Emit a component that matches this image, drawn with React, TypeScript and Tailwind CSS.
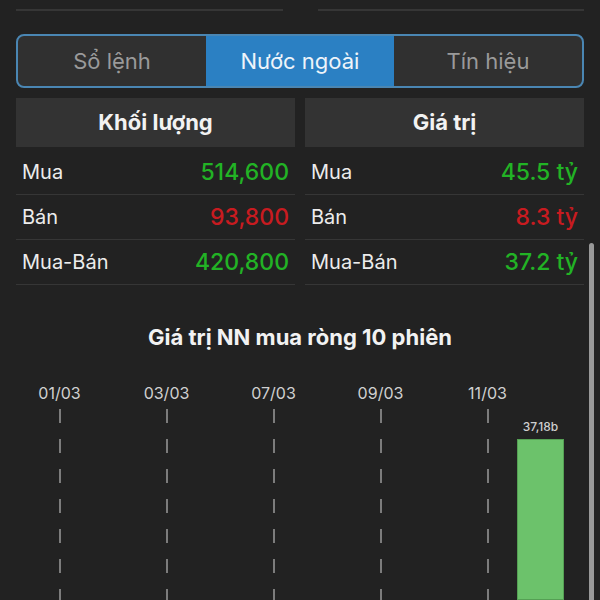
import React from "react";

const rowsVolume = [
  { label: "Mua", value: "514,600", color: "text-[#22b325]" },
  { label: "Bán", value: "93,800", color: "text-[#c81b20]" },
  { label: "Mua-Bán", value: "420,800", color: "text-[#22b325]" },
];

const rowsValue = [
  { label: "Mua", value: "45.5 tỷ", color: "text-[#22b325]" },
  { label: "Bán", value: "8.3 tỷ", color: "text-[#c81b20]" },
  { label: "Mua-Bán", value: "37.2 tỷ", color: "text-[#22b325]" },
];

const dates = ["01/03", "03/03", "07/03", "09/03", "11/03"];

type Row = { label: string; value: string; color: string };

const StatColumn = ({ title, rows }: { title: string; rows: Row[] }) => (
  <div className="flex flex-col">
    <div className="h-[49px] flex items-center justify-center bg-[#333333] text-[22px] font-bold text-[#f2f2f2]">
      {title}
    </div>
    <div className="mt-[3px] flex flex-col">
      {rows.map((r) => (
        <div
          key={r.label}
          className="h-[45px] flex items-center justify-between border-b border-[#363636] pl-[6px] pr-[6px]"
        >
          <span className="text-[20px] text-[#ececec]">{r.label}</span>
          <span className={`text-[23px] font-medium ${r.color}`}>{r.value}</span>
        </div>
      ))}
    </div>
  </div>
);

export default function App() {
  return (
    <div
      className="relative h-[600px] w-[600px] overflow-hidden bg-[#222222]"
      style={{ fontFamily: "Inter, Roboto, 'Noto Sans', sans-serif" }}
    >
      {/* top separators from the section above */}
      <div className="flex justify-between px-[16px] pt-[9px]">
        <div className="h-[2px] w-[267px] bg-[#363636]" />
        <div className="h-[2px] w-[266px] bg-[#363636]" />
      </div>

      {/* segmented control */}
      <div className="mx-[16px] mt-[23px] flex h-[54px] overflow-hidden rounded-[8px] border-2 border-[#4a86b3] bg-[#303030]">
        <div className="flex flex-1 items-center justify-center text-[22px] text-[#9a9a9a]">Sổ lệnh</div>
        <div className="flex flex-1 items-center justify-center bg-[#2b80c3] text-[22px] text-[#eef4fa]">
          Nước ngoài
        </div>
        <div className="flex flex-1 items-center justify-center text-[22px] text-[#9a9a9a]">Tín hiệu</div>
      </div>

      {/* stats */}
      <div className="mx-[16px] mt-[10px] grid grid-cols-[279px_279px] gap-x-[10px]">
        <StatColumn title="Khối lượng" rows={rowsVolume} />
        <StatColumn title="Giá trị" rows={rowsValue} />
      </div>

      {/* chart */}
      <div className="mt-[38px] text-center text-[22px] leading-[28px] font-bold text-[#f2f2f2]">
        Giá trị NN mua ròng 10 phiên
      </div>

      <div className="mt-[32px] flex h-[217px] pl-[6px]">
        {dates.map((d) => (
          <div key={d} className="flex w-[107px] shrink-0 flex-col items-center">
            <span className="h-[20px] text-[16px] leading-[20px] text-[#d0d0d0]">{d}</span>
            <div className="mt-[6px] w-[2px] flex-1 bg-[repeating-linear-gradient(to_bottom,#7c7c7c_0_14px,transparent_14px_30px)]" />
          </div>
        ))}
        <div className="-ml-[24px] flex w-[47px] shrink-0 flex-col items-center">
          <div className="h-[20px]" />
          <span className="mt-[16px] h-[16px] text-[12px] leading-[16px] font-medium text-[#cfcfcf]">37,18b</span>
          <div className="mt-[4px] w-[47px] flex-1 border border-[#55a054] bg-[#6cc26b]" />
        </div>
      </div>

      {/* scroll indicator */}
      <div className="absolute right-[6px] top-[243px] h-[370px] w-[5px] rounded-full bg-[#999999]" />
    </div>
  );
}
